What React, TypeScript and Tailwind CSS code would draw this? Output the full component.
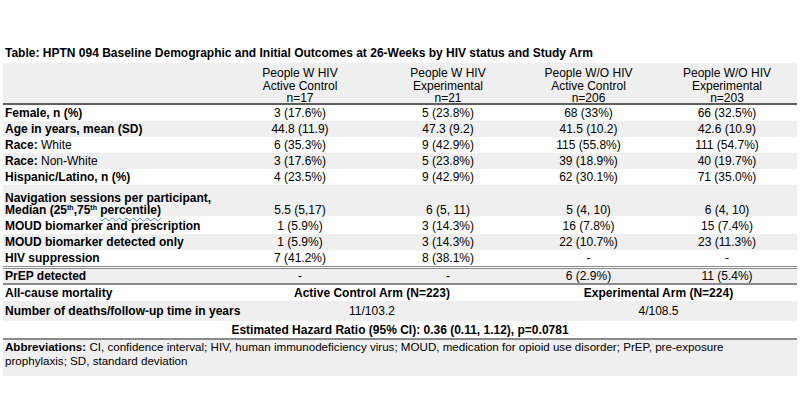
import React from "react";

const F = { fontFamily: '"Liberation Sans", Arial, sans-serif' };

type Row = { label: React.ReactNode; vals: string[]; gray?: boolean };

const cols = "grid grid-cols-[221px_152px_144px_137px_140px]";

function DataRow({ label, vals, gray, cls = "h-[16px] items-center" }: Row & { cls?: string }) {
  return (
    <div className={`${cols} ${gray ? "bg-[#efefef]" : ""} ${cls}`}>
      <div className="pl-[2px] whitespace-nowrap">{label}</div>
      {vals.map((v, i) => (
        <div key={i} className="text-center">
          {v}
        </div>
      ))}
    </div>
  );
}

function Th() {
  return <span className="relative top-[-4px] text-[7px] leading-none">th</span>;
}

export default function App() {
  return (
    <div style={F} className="w-[800px] h-[419px] bg-white text-black text-[12px] leading-[14px] pt-[45px] pl-[3px]">
      <div className="w-[794px]">
        <div className="font-bold pl-[2px] h-[18px] pt-[1px] whitespace-nowrap">
          Table: HPTN 094 Baseline Demographic and Initial Outcomes at 26-Weeks by HIV status and Study Arm
        </div>
        {/* header */}
        <div className={`${cols} bg-[#efefef] h-[42px] pt-[4px] leading-[12.5px] border-b-[2px] border-[#5e5e5e]`}>
          <div />
          <div className="text-center">People W HIV<br />Active Control<br />n=17</div>
          <div className="text-center">People W HIV<br />Experimental<br />n=21</div>
          <div className="text-center">People W/O HIV<br />Active Control<br />n=206</div>
          <div className="text-center">People W/O HIV<br />Experimental<br />n=203</div>
        </div>
        <DataRow label={<b>Female, n (%)</b>} vals={["3 (17.6%)", "5 (23.8%)", "68 (33%)", "66 (32.5%)"]} />
        <DataRow gray label={<b>Age in years, mean (SD)</b>} vals={["44.8 (11.9)", "47.3 (9.2)", "41.5 (10.2)", "42.6 (10.9)"]} />
        <DataRow label={<><b>Race:</b> White</>} vals={["6 (35.3%)", "9 (42.9%)", "115 (55.8%)", "111 (54.7%)"]} />
        <DataRow gray label={<><b>Race:</b> Non-White</>} vals={["3 (17.6%)", "5 (23.8%)", "39 (18.9%)", "40 (19.7%)"]} />
        <DataRow label={<b>Hispanic/Latino, n (%)</b>} vals={["4 (23.5%)", "9 (42.9%)", "62 (30.1%)", "71 (35.0%)"]} />
        <div className={`${cols} bg-[#efefef] pt-[7px] items-end leading-[12px]`}>
          <div className="pl-[2px] font-bold whitespace-nowrap">
            Navigation sessions per participant,
            <br />
            Median (25<Th />,75<Th />{" "}
            <span className="underline decoration-wavy decoration-[#4a7fd6] decoration-[1px] underline-offset-[3px]">percentile)</span>
          </div>
          <div className="text-center">5.5 (5,17)</div>
          <div className="text-center">6 (5, 11)</div>
          <div className="text-center">5 (4, 10)</div>
          <div className="text-center">6 (4, 10)</div>
        </div>
        <DataRow label={<b>MOUD biomarker and prescription</b>} vals={["1 (5.9%)", "3 (14.3%)", "16 (7.8%)", "15 (7.4%)"]} cls="h-[18px] pt-[3px]" />
        <DataRow gray label={<b>MOUD biomarker detected only</b>} vals={["1 (5.9%)", "3 (14.3%)", "22 (10.7%)", "23 (11.3%)"]} />
        <DataRow label={<b>HIV suppression</b>} vals={["7 (41.2%)", "8 (38.1%)", "-", "-"]} />
        <div className="border-t-[3px] border-double border-[#8a8a8a]" />
        <DataRow gray label={<b>PrEP detected</b>} vals={["-", "-", "6 (2.9%)", "11 (5.4%)"]} cls="h-[14px] items-center" />
        <div className="border-t-[2px] border-[#8a8a8a]" />
        <div className="grid grid-cols-[221px_296px_277px] h-[16px] items-center font-bold">
          <div className="pl-[2px]">All-cause mortality</div>
          <div className="text-center">Active Control Arm (N=223)</div>
          <div className="text-center">Experimental Arm (N=224)</div>
        </div>
        <div className="grid grid-cols-[221px_296px_277px] h-[20px] items-center bg-[#efefef]">
          <div className="pl-[2px] font-bold whitespace-nowrap">Number of deaths/follow-up time in years</div>
          <div className="text-center">11/103.2</div>
          <div className="text-center">4/108.5</div>
        </div>
        <div className="h-[17px] flex items-center justify-center font-bold">
          Estimated Hazard Ratio (95% CI): 0.36 (0.11, 1.12), p=0.0781
        </div>
        <div className="border-t-[2px] border-[#8a8a8a]" />
        <div className="bg-[#efefef] pl-[2px] pb-[8px] leading-[14px] text-[11.6px] whitespace-nowrap">
          <b>Abbreviations:</b> CI, confidence interval; HIV, human immunodeficiency virus; MOUD, medication for opioid use disorder; PrEP, pre-exposure
          <br />
          prophylaxis; SD, standard deviation
        </div>
      </div>
    </div>
  );
}
